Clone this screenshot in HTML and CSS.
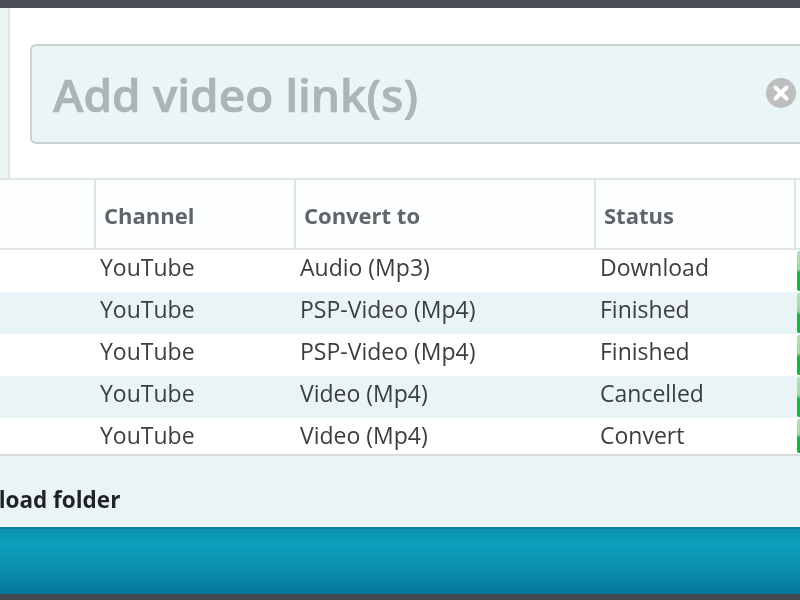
FILE: index.html
```html
<!DOCTYPE html>
<html lang="en">
<head>
<meta charset="utf-8">
<title>Video downloader</title>
<link rel="stylesheet" href="styles.css">
</head>
<body>
<div class="app">
  <div class="topbar"></div>
  <section class="linkarea">
    <div class="sidestrip"></div>
    <div class="linkpad">
      <div class="linkbox">
        <span class="placeholder">Add video link(s)</span>
        <svg class="clear" width="30" height="30" viewBox="0 0 30 30" aria-hidden="true"><circle cx="15" cy="15" r="15" fill="#bdbebe"/><path d="M9.5 9.5 20.5 20.5M20.5 9.5 9.5 20.5" stroke="#fff" stroke-width="4" stroke-linecap="round"/></svg>
      </div>
    </div>
  </section>
  <section class="table">
    <div class="row head">
      <div class="c0"></div>
      <div class="c1">Channel</div>
      <div class="c2">Convert to</div>
      <div class="c3">Status</div>
      <div class="c4"></div>
    </div>
    <div class="row"><div class="c0"></div><div class="c1">YouTube</div><div class="c2">Audio (Mp3)</div><div class="c3">Download</div><div class="c4"><i class="bar"></i></div></div>
    <div class="row alt"><div class="c0"></div><div class="c1">YouTube</div><div class="c2">PSP-Video (Mp4)</div><div class="c3">Finished</div><div class="c4"><i class="bar"></i></div></div>
    <div class="row"><div class="c0"></div><div class="c1">YouTube</div><div class="c2">PSP-Video (Mp4)</div><div class="c3">Finished</div><div class="c4"><i class="bar"></i></div></div>
    <div class="row alt"><div class="c0"></div><div class="c1">YouTube</div><div class="c2">Video (Mp4)</div><div class="c3">Cancelled</div><div class="c4"><i class="bar"></i></div></div>
    <div class="row last"><div class="c0"></div><div class="c1">YouTube</div><div class="c2">Video (Mp4)</div><div class="c3">Convert</div><div class="c4"><i class="bar"></i></div></div>
  </section>
  <section class="folder"><span class="foldertext">Download folder</span></section>
  <div class="teal"></div>
  <div class="bottombar"></div>
</div>
</body>
</html>
```
FILE: styles.css
```css
* { box-sizing: border-box; }
html, body { margin: 0; height: 100%; overflow: hidden; }
body { background: #fff; font-family: "Open Sans", "Liberation Sans", sans-serif; color: #444; }
.app { width: 800px; height: 600px; display: flex; flex-direction: column; overflow: hidden; filter: blur(0.5px); }
.topbar { height: 8px; background: #4b4e58; flex: none; }
.linkarea { height: 172px; display: flex; flex: none; border-bottom: 2px solid #dfe5e5; }
.sidestrip { width: 10px; background: #eaf5f6; border-right: 2px solid #dde5e5; flex: none; }
.linkpad { flex: 1; padding: 36px 0 0 20px; min-width: 0; }
.linkbox { width: 790px; height: 100px; display: flex; align-items: center; justify-content: space-between; background: #e9f5f6; border: 2px solid #c9d1d1; border-right: 0; border-radius: 6px 0 0 6px; padding: 0 24px 2px 21px; }
.placeholder { font-size: 46px; font-weight: 600; color: #aeb4b5; line-height: 1; padding-top: 2px; -webkit-text-stroke: 0.7px #aeb4b5; }
.clear { flex: none; }
.table { flex: none; }
.row { display: flex; height: 42px; font-size: 23px; color: #3d3d3d; background: #fff; align-items: stretch; }
.row > div { display: flex; align-items: center; padding: 0 0 8px 4px; flex: none; }
.alt { background: #e9f4f6; }
.last { height: 38px; border-bottom: 2px solid #d5dddd; }
.last > div { padding-bottom: 2px; }
.head { height: 70px; font-size: 22px; font-weight: 700; color: #606668; background: #fcfeff; border-bottom: 2px solid #dfe5e5; }
.row.head > div { padding: 1px 0 0 8px; border-right: 2px solid #dde4e4; }
.row.head > .c4 { border-right: 0; padding: 0; }
.c0 { width: 96px; }
.c1 { width: 200px; }
.c2 { width: 300px; }
.c3 { width: 200px; }
.row > .c4 { flex: 1 1 0; min-width: 0; padding: 1px 0 1px 1px; align-items: stretch; }
.bar { display: block; width: 3px; border-radius: 2px 0 0 2px; background: linear-gradient(#b5e0bd 0, #9ed8a8 45%, #1eb043 55%, #1eb043 100%); }
.folder { height: 71px; flex: none; background: #eaf4f6; display: flex; align-items: center; overflow: hidden; padding-top: 18px; border-bottom: 2px solid #f7fbfc; }
.foldertext { font-size: 22.5px; font-weight: 700; color: #1f2326; margin-left: -66px; white-space: nowrap; }
.teal { flex: 1; background: linear-gradient(#0a93b0 0, #0d9fbc 25%, #0a8fac 60%, #04789a 100%); border-top: 2px solid #0c7f99; }
.bottombar { height: 6px; background: #45494f; flex: none; }
```
